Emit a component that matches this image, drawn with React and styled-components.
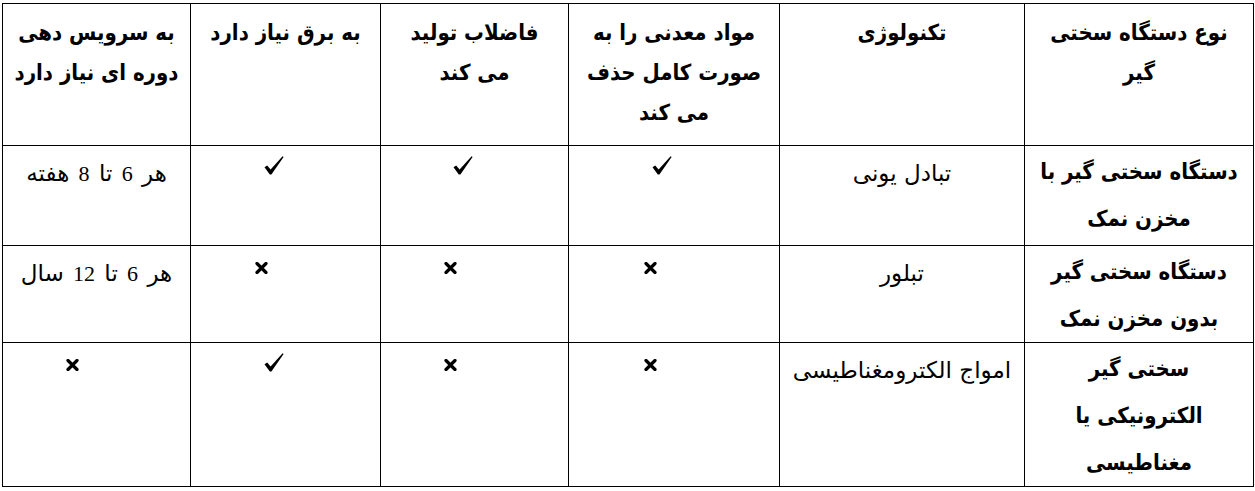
import React from 'react';
import styled, { createGlobalStyle } from 'styled-components';

const GlobalStyle = createGlobalStyle`
  html, body {
    margin: 0;
    padding: 0;
    background: #fff;
  }
`;

const widths = [229, 245, 211, 188, 190, 188];

const headers = [
  ['نوع دستگاه سختی', 'گیر'],
  ['تکنولوژی'],
  ['مواد معدنی را به', 'صورت کامل حذف', 'می کند'],
  ['فاضلاب تولید', 'می کند'],
  ['به برق نیاز دارد'],
  ['به سرویس دهی', 'دوره ای نیاز دارد'],
];

const rows = [
  {
    name: ['دستگاه سختی گیر با', 'مخزن نمک'],
    tech: 'تبادل یونی',
    marks: [true, true, true],
    service: ['هر ', '6', ' تا ', '8', ' هفته'],
    height: 100,
  },
  {
    name: ['دستگاه سختی گیر', 'بدون مخزن نمک'],
    tech: 'تبلور',
    marks: [false, false, false],
    service: ['هر ', '6', ' تا ', '12', ' سال'],
    height: 96,
  },
  {
    name: ['سختی گیر', 'الکترونیکی یا', 'مغناطیسی'],
    tech: 'امواج الکترومغناطیسی',
    marks: [false, false, true],
    service: null,
    height: 144,
  },
];

const isNumber = s => /^\d+$/.test(s);

const CheckIcon = () => (
  <svg width="20" height="19" viewBox="0 0 20 19">
    <path d="M0.5 11.2 L3.2 9.6 L6.6 13.4 L18.6 0.3 L19.6 1.1 L7.4 18.6 L5.8 18.6 Z" fill="#000" />
  </svg>
);

const CrossIcon = () => (
  <svg width="13" height="12" viewBox="0 0 13 12">
    <path
      d="M2 1.5 L11 10.5 M11 1.5 L2 10.5"
      stroke="#000"
      strokeWidth="3.2"
      strokeLinecap="round"
      fill="none"
    />
  </svg>
);

const Mark = ({ yes }) => (
  <MarkBox yes={yes}>{yes ? <CheckIcon /> : <CrossIcon />}</MarkBox>
);

const App = () => {
  return (
    <Page>
      <GlobalStyle />
      <Table dir="rtl">
        <colgroup>
          {widths.map((w, i) => (
            <col key={i} style={{ width: w }} />
          ))}
        </colgroup>
        <thead>
          <tr>
            {headers.map((h, i) => (
              <HeadCell key={i}>
                {h.map((line, k) => (
                  <Line key={k}>{line}</Line>
                ))}
              </HeadCell>
            ))}
          </tr>
        </thead>
        <tbody>
          {rows.map((row, i) => (
            <tr key={i} style={{ height: row.height }}>
              <Cell bold>
                {row.name.map((line, k) => (
                  <Line key={k}>{line}</Line>
                ))}
              </Cell>
              <Cell>{row.tech}</Cell>
              {row.marks.map((m, j) => (
                <Cell key={j}>
                  <Mark yes={m} />
                </Cell>
              ))}
              <Cell>
                {row.service ? (
                  row.service.map((part, k) =>
                    isNumber(part) ? <Num key={k}>{part}</Num> : part
                  )
                ) : (
                  <Mark yes={false} />
                )}
              </Cell>
            </tr>
          ))}
        </tbody>
      </Table>
    </Page>
  );
};

const Page = styled.div`
  padding: 3px 2px 0 2px;
  color: #000;
`;

const Table = styled.table`
  width: 1251px;
  table-layout: fixed;
  border-collapse: collapse;
`;

const Line = styled.span`
  display: block;
  white-space: nowrap;
`;

const boldFont = "'DejaVu Sans Condensed', 'DejaVu Sans', sans-serif";

const HeadCell = styled.th`
  border: 1px solid #000;
  padding: 9px 2px 0;
  height: 142px;
  box-sizing: border-box;
  vertical-align: top;
  text-align: center;
  font-family: ${boldFont};
  font-weight: bold;
  font-size: 22px;
  line-height: 40px;
`;

const Cell = styled.td`
  border: 1px solid #000;
  padding: ${props => (props.bold ? '2px 2px 0' : '4px 2px 0')};
  vertical-align: top;
  text-align: center;
  font-family: ${props => (props.bold ? boldFont : "'DejaVu Sans', sans-serif")};
  font-weight: ${props => (props.bold ? 'bold' : 'normal')};
  font-size: ${props => (props.bold ? '22px' : '23px')};
  line-height: 47px;
`;

const Num = styled.span`
  font-family: 'Liberation Serif', serif;
  font-size: 22px;
  margin: 0 2px;
`;

const MarkBox = styled.span`
  display: inline-block;
  vertical-align: top;
  line-height: 0;
  margin-top: ${props => (props.yes ? '6px' : '12px')};
  margin-right: ${props => (props.yes ? '24px' : '48px')};
`;

export default App;
